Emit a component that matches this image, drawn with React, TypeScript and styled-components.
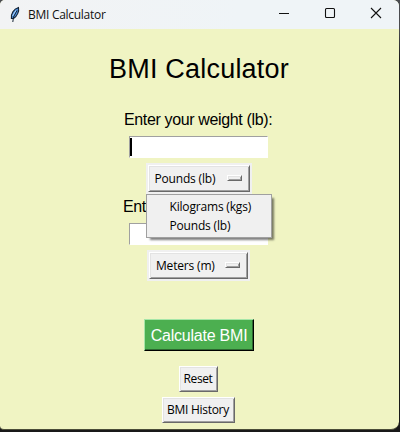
import React from 'react';
import styled, { createGlobalStyle } from 'styled-components';

const GlobalStyle = createGlobalStyle`
  * { box-sizing: border-box; }
  body { margin: 0; background: #141414; overflow: hidden; }
`;

const Desktop = styled.div`
  width: 400px;
  height: 432px;
  background: linear-gradient(#4a4c50 0 30px, #191919 60px);
`;

const Window = styled.main`
  width: 399px;
  height: 430px;
  display: flex;
  flex-direction: column;
  overflow: hidden;
  background: #f0f4c3;
  border-bottom: 1px solid #4b4d38;
  border-radius: 5px 6px 8px 4px;
`;

const TitleBar = styled.header`
  height: 29px;
  flex: none;
  display: flex;
  align-items: center;
  background: linear-gradient(90deg, #f2f3f4, #eff4f7 60%);
  padding-left: 9px;
`;

const Title = styled.span`
  flex: 1;
  margin-left: 7px;
  font: 12px/16px 'Open Sans', sans-serif;
  letter-spacing: -0.28px;
  color: #111;
`;

const WindowControls = styled.div`
  display: flex;
  gap: 34px;
  padding: 0 17px 3px 0;
  svg { display: block; }
`;

const Body = styled.section`
  flex: 1;
  display: flex;
  flex-direction: column;
  align-items: center;
  padding: 23px 2px 0 0;
  font-family: 'Liberation Sans', Arial, sans-serif;
  color: #000;
`;

const Heading = styled.h1`
  margin: 0;
  padding-left: 1px;
  font-size: 27px;
  line-height: 34px;
  font-weight: 400;
  letter-spacing: 0.2px;
  white-space: nowrap;
`;

const FieldLabel = styled.label<{ $top: number; $indent: number }>`
  width: 151px;
  height: 20px;
  margin-top: ${(p) => p.$top}px;
  padding-left: ${(p) => p.$indent}px;
  font-size: 16px;
  line-height: 20px;
  letter-spacing: -0.36px;
  white-space: nowrap;
`;

const Entry = styled.div<{ $top: number }>`
  width: 139px;
  height: 22px;
  margin: ${(p) => p.$top}px 0 5px;
  padding-top: 1px;
  background: #fff;
  border: 1px solid #fff;
  border-top-color: #a0a0a0;
  border-left-color: #a0a0a0;
`;

const Caret = styled.div`
  width: 2px;
  height: 18px;
  background: #000;
`;

const OptionHolder = styled.div`
  position: relative;
  padding: 2px;
  background: #f0f0f0;
`;

const OptionButton = styled.div<{ $width: number }>`
  width: ${(p) => p.$width}px;
  height: 27px;
  display: flex;
  align-items: center;
  justify-content: space-between;
  padding: 1px 7px 0 6px;
  background: #f0f0f0;
  border: 1px solid;
  border-color: #fff #696969 #696969 #fff;
  box-shadow: inset 1px 1px #e3e3e3, inset -1px -1px #a0a0a0;
`;

const UiText = styled.span<{ $spacing?: number }>`
  font: 12px/16px 'Open Sans', sans-serif;
  letter-spacing: ${(p) => p.$spacing ?? -0.18}px;
  white-space: nowrap;
  color: #000;
`;

const Indicator = styled.i`
  width: 15px;
  height: 6px;
  margin-top: -3px;
  background: #f0f0f0;
  border: 1px solid;
  border-color: #fff #696969 #696969 #fff;
  box-shadow: inset 1px 1px #e3e3e3, inset -1px -1px #a0a0a0;
`;

const Menu = styled.div`
  position: absolute;
  z-index: 2;
  left: 0;
  top: 31px;
  width: 126px;
  height: 44px;
  display: flex;
  flex-direction: column;
  gap: 3px;
  padding: 4px 0 0 23px;
  background: #f0f0f0;
  border: 1px solid #a0a0a0;
  box-shadow: 3px 3px 2px -1px rgba(0, 0, 0, 0.5);
`;

const CalculateButton = styled.button`
  width: 110px;
  height: 32px;
  margin-top: 38px;
  padding: 2px 0 0 1px;
  background: #4caf50;
  border: 1px solid;
  border-color: #a5e6a8 #000 #000 #a5e6a8;
  box-shadow: inset -1px -1px #2d6930;
  color: #fff;
  font: 16px/20px 'Liberation Sans', Arial, sans-serif;
  letter-spacing: -0.22px;
  white-space: nowrap;
`;

const PlainButton = styled.button<{ $width: number; $top: number }>`
  width: ${(p) => p.$width}px;
  height: 26px;
  margin-top: ${(p) => p.$top}px;
  padding: 0 1px 0 0;
  background: #f0f0f0;
  border: 1px solid;
  border-color: #fff #696969 #696969 #fff;
  box-shadow: inset 1px 1px #e3e3e3, inset -1px -1px #a0a0a0;
`;

function Feather() {
  return (
    <svg width="12" height="18" viewBox="0 0 12 18">
      <path d="M2.4 12.500C1.800 8 4.500 3 9.500 1.500C10.300 5 8.500 10 4.500 12.500Z" fill="#4b8fdc" stroke="#172536" strokeWidth="1.1" />
      <path d="M3.600 10L7 4.500" stroke="#a9d2ff" strokeWidth="1.1" />
      <path d="M3.800 16L4.500 11L8 4.500" fill="none" stroke="#172536" strokeWidth="1" />
    </svg>
  );
}

export default function App() {
  return (
    <Desktop>
      <GlobalStyle />
      <Window>
        <TitleBar>
          <Feather />
          <Title>BMI Calculator</Title>
          <WindowControls>
            <svg width="12" height="12"><path d="M1 6.500H11" stroke="#111" /></svg>
            <svg width="12" height="12"><rect x="1.500" y="1.500" width="9" height="9" rx="1" fill="none" stroke="#111" strokeWidth="1.1" /></svg>
            <svg width="12" height="12"><path d="M1 1L11 11M11 1L1 11" stroke="#111" strokeWidth="1.1" /></svg>
          </WindowControls>
        </TitleBar>
        <Body>
          <Heading>BMI Calculator</Heading>
          <FieldLabel $top={24} $indent={1}>Enter your weight (lb):</FieldLabel>
          <Entry $top={6}><Caret /></Entry>
          <OptionHolder>
            <OptionButton $width={102}>
              <UiText>Pounds (lb)</UiText>
              <Indicator />
            </OptionButton>
            <Menu>
              <UiText>Kilograms (kgs)</UiText>
              <UiText>Pounds (lb)</UiText>
            </Menu>
          </OptionHolder>
          <FieldLabel $top={3} $indent={0}>Ent</FieldLabel>
          <Entry $top={6} />
          <OptionHolder>
            <OptionButton $width={99}>
              <UiText>Meters (m)</UiText>
              <Indicator />
            </OptionButton>
          </OptionHolder>
          <CalculateButton>Calculate BMI</CalculateButton>
          <PlainButton $width={39} $top={15}><UiText $spacing={-0.4}>Reset</UiText></PlainButton>
          <PlainButton $width={73} $top={5}><UiText $spacing={-0.28}>BMI History</UiText></PlainButton>
        </Body>
      </Window>
    </Desktop>
  );
}
